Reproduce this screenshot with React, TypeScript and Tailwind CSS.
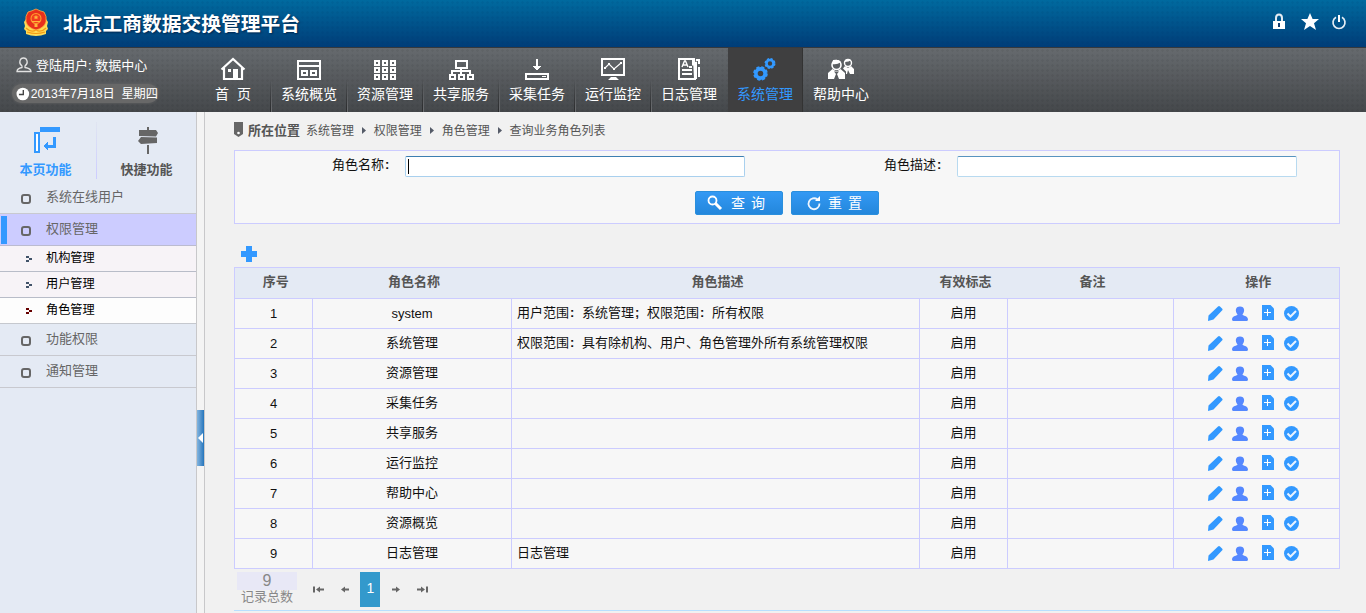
import type { ReactNode } from 'react';

const navItems: { label: string; icon: ReactNode }[] = [
  {
    label: '首 页',
    icon: (
      <>
        <path d="M1.5 12.500 13 2 24.500 12.500M4 11v11h18V11" fill="none" stroke="#fff" strokeWidth="2.200" />
        <path d="M8 12h3v3H8zM13 12h5v10h-5z" fill="#fff" />
      </>
    ),
  },
  {
    label: '系统概览',
    icon: (
      <g fill="none" stroke="#fff" strokeWidth="2" shapeRendering="crispEdges">
        <path d="M2 4h22v18H2zM2 9h22" />
        <path d="M6 14h5v4H6zM15 14h5v4h-5z" />
      </g>
    ),
  },
  {
    label: '资源管理',
    icon: (
      <g fill="none" stroke="#fff" strokeWidth="2" shapeRendering="crispEdges">
        <path d="M3 4h4v4H3zM11 4h4v4h-4zM19 4h4v4h-4zM3 11h4v4H3zM11 11h4v4h-4zM19 11h4v4h-4zM3 18h4v4H3zM11 18h4v4h-4zM19 18h4v4h-4z" />
      </g>
    ),
  },
  {
    label: '共享服务',
    icon: (
      <g fill="none" stroke="#fff" strokeWidth="2" shapeRendering="crispEdges">
        <path d="M8 4h11v7H8z" />
        <path d="M13 11v6M4 17v-3h18v3M2 18h5v4H2zM11 18h5v4h-5zM20 18h5v4h-5z" />
      </g>
    ),
  },
  {
    label: '采集任务',
    icon: (
      <g shapeRendering="crispEdges">
        <path d="M2 17h22v5H2z" fill="none" stroke="#fff" strokeWidth="2" />
        <path d="M12 2h2v7h3l-4 5-4-5h3zM18 19h4v1h-4z" fill="#fff" />
      </g>
    ),
  },
  {
    label: '运行监控',
    icon: (
      <>
        <path d="M2 2h22v16H2z" fill="none" stroke="#fff" strokeWidth="2" />
        <path d="m5 11 4-4 5 5 7-6" fill="none" stroke="#fff" strokeWidth="1.200" />
        <path d="M4 10h2v2H4zM8 6h2v2H8zM13 11h2v2h-2zM20 5h2v2h-2zM11 20h5l3 3H8z" fill="#fff" />
      </>
    ),
  },
  {
    label: '日志管理',
    icon: (
      <>
        <path d="M18 2H3v20h16zM17 2v5l3-1v16M20 3h3v4M23 10v10" fill="none" stroke="#fff" strokeWidth="2" />
        <path d="m6 10 2.500-6h1L12 10M7 8h4" fill="none" stroke="#fff" strokeWidth="1.400" />
        <path d="M13 10h3M6 13h10M6 17h10" fill="none" stroke="#fff" strokeWidth="2" />
      </>
    ),
  },
  {
    label: '系统管理',
    icon: (
      <g fill="none" stroke="#3399ff">
        <circle cx="8.500" cy="16.500" r="4.600" strokeWidth="3.600" />
        <circle cx="8.500" cy="16.500" r="6.200" strokeWidth="2.200" strokeDasharray="3 1.870" />
        <circle cx="18" cy="6.500" r="3.500" strokeWidth="2.600" />
        <circle cx="18" cy="6.500" r="4.700" strokeWidth="1.600" strokeDasharray="2.200 1.490" />
      </g>
    ),
  },
  {
    label: '帮助中心',
    icon: (
      <>
        <circle cx="8.500" cy="8" r="4.500" fill="none" stroke="#fff" strokeWidth="1.600" />
        <path d="M4 7q5 1 9-2-2-3-8-2zM4.500 12 0 16v6h6l2-5-2-2.500h5L9 17l2 5h6v-6l-4.500-4-3 2h-2z" fill="#fff" />
        <circle cx="20" cy="6" r="3.500" fill="none" stroke="#fff" strokeWidth="1.400" />
        <path d="M17 5q4 0 6-2-3-2-6 0zM17 9l-2 2.500 3 3V17h1l1-4 2 4h4v-5l-3-3-3 2z" fill="#fff" />
      </>
    ),
  },
];

const rows = [
  { name: 'system', desc: '用户范围: 系统管理; 权限范围: 所有权限' },
  { name: '系统管理', desc: '权限范围: 具有除机构、用户、角色管理外所有系统管理权限' },
  { name: '资源管理', desc: '' },
  { name: '采集任务', desc: '' },
  { name: '共享服务', desc: '' },
  { name: '运行监控', desc: '' },
  { name: '帮助中心', desc: '' },
  { name: '资源概览', desc: '' },
  { name: '日志管理', desc: '日志管理' },
];

/* Full-width punctuation is drawn in a fixed 13px cell. */
function Wide({ text }: { text: string }) {
  return (
    <>
      {text.split(/([:;])\s?/).map((part, i) =>
        part === ':' || part === ';' ? (
          <span key={i} className="inline-block w-[13px] pl-px font-bold">{part}</span>
        ) : (
          part
        ),
      )}
    </>
  );
}

function Emblem() {
  return (
    <svg className="h-7 w-7" viewBox="0 0 28 28">
      <path d="M4 11 2 14l1 4-1 3 2 2v3q10 4 20 0v-3l2-2-1-3 1-4-2-3z" fill="#ffdc55" />
      <path d="M4 20q5 5 10 2 5 3 10-2M5 24q9 3 18 0" fill="none" stroke="#f59a14" strokeWidth="1.100" />
      <path d="M14 1q4 2 8 3 3 4 2 10-2 6-10 8Q6 20 4 14 3 8 6 4q4-1 8-3z" fill="#e8301c" stroke="#ffb040" strokeWidth=".8" />
      <circle cx="14" cy="10.500" r="5" fill="#f23c1f" stroke="#ff9d2e" strokeWidth="1.100" />
      <path d="m14 7 .8 1.500h1.700l-1.300 1.200.4 1.600-1.600-.9-1.600.9.4-1.600-1.300-1.200h1.700zM10 13h8v1h-8zM12.500 16h3v3h-3z" fill="#ffb63d" />
    </svg>
  );
}

function Square() {
  return <span className="h-[10px] w-[10px] rounded-[3px] border-2 border-[#666]" />;
}

function MenuItem({ label, active = false }: { label: string; active?: boolean }) {
  return (
    <div
      className={
        active
          ? 'flex h-8 items-center border-b border-[#bbbbd0] bg-[#ccccff] text-[13px] text-[#666]'
          : 'flex h-8 items-center border-b border-[#c8c9cf] text-[13px] text-[#666]'
      }
    >
      <span className={active ? 'ml-px h-7 w-[6px] bg-[#3399ff]' : 'ml-px h-7 w-[6px]'} />
      <span className="ml-[14px] mt-[3px] flex"><Square /></span>
      <span className="-mt-[2px] ml-[15px]">{label}</span>
    </div>
  );
}

function SubItem({ label, active = false }: { label: string; active?: boolean }) {
  return (
    <div
      className={
        active
          ? 'flex h-[26px] items-start border-b border-[#c5c8ce] bg-[#fdfdfd] text-[12.2px] text-black'
          : 'flex h-[26px] items-start border-b border-[#b8bcc8] bg-[#f7f3f7] text-[12.2px] text-black'
      }
    >
      <svg className="ml-[26px] mt-[10px] h-[6px] w-[6px]" viewBox="0 0 6 6" shapeRendering="crispEdges">
        <path d="M0 0h3v2H0zM3 2h3v2H3zM0 4h3v2H0z" fill={active ? '#660000' : '#415269'} />
      </svg>
      <span className="ml-[14px] leading-[25px]">{label}</span>
    </div>
  );
}

function Crumb({ label }: { label: string }) {
  return (
    <>
      <svg className="ml-[8px] mr-[7.800px] h-[7px] w-[4px]" viewBox="0 0 4 7"><path d="M0 0l4 3.500L0 7z" fill="#555b68" /></svg>
      <span>{label}</span>
    </>
  );
}

function RowActions() {
  return (
    <div className="flex h-[27px] items-start pl-[33px] pt-[5px]">
      <svg className="h-4 w-4" viewBox="0 0 16 16">
        <path d="M1 16l.5-5.500L11 1.500q1-1 2 0l2.500 2.500v1L6.500 14.500z" fill="#3399ff" />
      </svg>
      <svg className="ml-[9px] mt-px h-4 w-4" viewBox="0 0 16 16">
        <path d="M8 .5c5 0 5 5 2.500 8 0 1.500 5.500 1 5.500 5 0 1.500-1 1.500-2 1.500H2c-1 0-2 0-2-1.500 0-4 5.500-3.500 5.500-5C3 5.500 3 .5 8 .5z" fill="#5588ff" />
      </svg>
      <svg className="ml-[14px] h-4 w-3" viewBox="0 0 12 16">
        <path d="M0 0h8.500L12 3.500V15H0z" fill="#3399ff" />
        <path d="M5.500 4v7M2 7.500h7" stroke="#fff" />
      </svg>
      <svg className="ml-[10px] mt-px h-4 w-4" viewBox="0 0 16 16">
        <circle cx="7.500" cy="7.500" r="7.500" fill="#3399ff" />
        <path d="m3.500 7.500 3 3 5.500-5.500" fill="none" stroke="#e9f3ff" strokeWidth="2" />
      </svg>
    </div>
  );
}

function Header() {
  return (
    <header className="flex h-12 items-center border-b border-[#35393e] bg-[radial-gradient(circle,rgba(0,40,90,0.08)_1px,transparent_1.5px),linear-gradient(#006a9f,#003d78)] bg-[size:5px_5px,100%_100%] pl-[22px] pr-[19px]">
      <div className="-mt-[3px]"><Emblem /></div>
      <h1 className="ml-[13px] text-[19.75px] font-bold leading-[46px] text-white [text-shadow:1px_1px_2px_#00264d]">北京工商数据交换管理平台</h1>
      <div className="ml-auto mt-[-4px] flex items-center">
        <svg className="h-[17px] w-[14px]" viewBox="0 0 14 17">
          <path d="M4 8V5q0-3.500 3-3.500T10 5v3" fill="none" stroke="#e3ebf2" strokeWidth="2" />
          <path d="M1 8h12v8H1z" fill="#fff" /><path d="M6 10h2v4H6z" fill="#123e70" />
        </svg>
        <svg className="ml-[15px] h-[18px] w-[18px]" viewBox="0 0 18 18">
          <path d="m9 0 2.600 6H18l-5 4.300 2 6.700-6-4-6 4 2-6.700L0 6h6.400z" fill="#fff" />
        </svg>
        <svg className="ml-[12px] h-4 w-4" viewBox="0 0 16 16">
          <path d="M5 3.300a6 6 0 1 0 6 0" fill="none" stroke="#e6eef5" strokeWidth="1.700" />
          <path d="M8 1v7" stroke="#fff" strokeWidth="2" />
        </svg>
      </div>
    </header>
  );
}

function NavBar() {
  return (
    <nav className="flex h-16 bg-[radial-gradient(circle,rgba(0,0,0,0.05)_1px,transparent_1.5px),linear-gradient(#666a6e,#45484b)] bg-[size:5px_5px,100%_100%] text-white">
      <div className="w-[195px] pl-3 pt-2">
        <div className="flex h-5 items-center pl-1 text-[13px]">
          <svg className="-mt-[2px] h-4 w-4" viewBox="0 0 16 16">
            <path d="M6 9C2 6 4 1 7.500 1S13 6 9 9v1.500q6 1 6 4H1q0-3 5-4z" fill="none" stroke="#e2e2e2" strokeWidth="1.300" />
          </svg>
          <span className="ml-1">登陆用户: 数据中心</span>
        </div>
        <div className="mt-[8px] flex h-[19px] w-[146px] items-center rounded-full bg-[#686868] pl-[4px] text-[12.2px] shadow-[0_0_3px_#686868]">
          <svg className="h-[14px] w-[14px]" viewBox="0 0 14 14"><circle cx="7" cy="7" r="6.500" fill="#fff" /><path d="M7.500 3v4.500H3" fill="none" stroke="#444" strokeWidth="1.400" /></svg>
          <span className="ml-px mt-[2px] whitespace-pre">2013年7月18日&nbsp; 星期四</span>
        </div>
      </div>
      {navItems.map((item, i) => (
        <div
          key={item.label}
          className={
            i === 7
              ? 'ml-px flex w-[75px] flex-col items-center border-r border-[#333] bg-[#3f3f40] pt-[9px] text-[#3399ff]'
              : 'flex w-[76px] flex-col items-center pt-[9px]'
          }
        >
          <svg className="h-6 w-[26px] overflow-visible" viewBox="0 0 26 24">{item.icon}</svg>
          <span className="mt-1 whitespace-pre text-[14px] leading-[18px]">{i === 0 ? '首  页' : item.label}</span>
          {i < 6 && (
            <span className="-mt-[24px] ml-[76px] flex h-[33px] w-[2px]">
              <span className="w-px bg-linear-to-b from-transparent to-[#2b2c2e]" />
              <span className="w-px bg-linear-to-b from-transparent to-[#6b6d70]" />
            </span>
          )}
        </div>
      ))}
    </nav>
  );
}

function Sidebar() {
  return (
    <aside className="w-[197px] border-r border-[#c8c8ca] bg-[#e4eaf4]">
      <div className="flex h-[70px] text-[13px] font-bold">
        <div className="flex w-24 flex-col items-center pl-0 pt-[14px] text-[#3399ff]">
          <svg className="-ml-[5px] h-[27px] w-[28px]" viewBox="0 0 28 27" shapeRendering="crispEdges">
            <path d="M8 1h20v5H8z" fill="#3399ff" /><path d="M3 7h4v19H3z" fill="#fff" stroke="#3399ff" strokeWidth="2" />
            <path d="M22.500 11v9H15" fill="none" stroke="#3399ff" strokeWidth="3" /><path d="M11 20l5-4v8z" fill="#3399ff" />
          </svg>
          <span className="-ml-[5px] mt-[8px] leading-[18px]">本页功能</span>
        </div>
        <span className="mt-[10px] h-[57px] w-px bg-linear-to-b from-[#e0e5f1] to-[#ccccff]" />
        <div className="flex w-[99px] flex-col items-center pt-[14px] text-[#555]">
          <svg className="ml-[3px] h-[28px] w-[24px]" viewBox="0 0 24 28">
            <path d="M11 1h2v3h-2zM3 4h17l2 3-2 3.500L3 10zM21 11.500 5 11l-3 4 3 3 16-1zM11 19h2v9h-2z" fill="#666" />
          </svg>
          <span className="mt-[7px] leading-[18px]">快捷功能</span>
        </div>
      </div>
      <MenuItem label="系统在线用户" />
      <MenuItem label="权限管理" active />
      <SubItem label="机构管理" />
      <SubItem label="用户管理" />
      <SubItem label="角色管理" active />
      <MenuItem label="功能权限" />
      <MenuItem label="通知管理" />
    </aside>
  );
}

function SearchPanel() {
  return (
    <section className="mt-[10px] h-[74px] border border-[#ccccff] bg-[#f7f7f7] pt-[5px] text-[13px] text-[#111]">
      <div className="flex">
        <label className="w-[170px] pl-[97px] leading-[18px]"><Wide text="角色名称:" /></label>
        <div className="h-[21px] w-[340px] rounded-[2px] border border-[#a9d0ee] border-t-[#3c7fb1] bg-white pl-[2px] pt-[2px]">
          <span className="block h-[15px] w-px bg-black" />
        </div>
        <label className="w-[212px] pl-[139px] leading-[18px]"><Wide text="角色描述:" /></label>
        <div className="h-[21px] w-[340px] rounded-[2px] border border-[#b8daf0] border-t-[#5794bf] bg-white" />
      </div>
      <div className="mt-[14px] flex justify-center gap-2 pl-0 text-[14px] text-white">
        <button className="flex h-6 w-[88px] items-center rounded-[2px] border border-[#2a8fdd] bg-linear-to-b from-[#3399f4] to-[#2387dc] pl-[11px]">
          <svg className="-mt-px h-4 w-4" viewBox="0 0 16 16"><circle cx="5.500" cy="5.500" r="4" fill="none" stroke="#fff" strokeWidth="1.800" /><path d="m8.500 8.500 5.500 5.500" stroke="#fff" strokeWidth="3" /></svg>
          <span className="ml-[8px] tracking-[6px]">查询</span>
        </button>
        <button className="flex h-6 w-[88px] items-center rounded-[2px] border border-[#2a8fdd] bg-linear-to-b from-[#3399f4] to-[#2387dc] pl-[14px]">
          <svg className="h-4 w-4" viewBox="0 0 16 16"><path d="M11.500 4.500a5.500 5.500 0 1 0 2 4" fill="none" stroke="#eef6ff" strokeWidth="1.800" /><path d="M9 6h5V1z" fill="#fff" /></svg>
          <span className="ml-[6px] tracking-[6px]">重置</span>
        </button>
      </div>
    </section>
  );
}

function RoleTable() {
  const cell = 'border border-[#ccccff] p-0';
  const textCell = 'border border-[#ccccff] p-0 pb-[2px]';
  return (
    <table className="mt-[5px] w-[1106px] table-fixed border-collapse bg-[#f7f7f7] text-[13px] text-[#111]">
      <colgroup>
        <col className="w-[78px]" /><col className="w-[199px]" /><col className="w-[408px]" /><col className="w-[88px]" /><col className="w-[166px]" /><col className="w-[166px]" />
      </colgroup>
      <thead>
        <tr className="h-[31px] bg-[#e4eaf4] text-[#555]">
          {['序号', '角色名称', '角色描述', '有效标志', '备注', '操作'].map((h) => (
            <th key={h} className="border-y border-[#ccccff] p-0 pb-[2px] pl-[4px] leading-[20px] first:border-l last:border-r">{h}</th>
          ))}
        </tr>
      </thead>
      <tbody>
        {rows.map((row, i) => (
          <tr key={row.name} className="h-[30px] text-center leading-[20px]">
            <td className={cell}>{i + 1}</td>
            <td className={i === 0 ? cell : textCell}>{row.name}</td>
            <td className="border border-[#ccccff] p-0 pb-[2px] pl-[5px] text-left"><Wide text={row.desc} /></td>
            <td className={textCell}>启用</td>
            <td className={cell} />
            <td className="border border-[#ccccff] p-0"><RowActions /></td>
          </tr>
        ))}
      </tbody>
    </table>
  );
}

function Pager() {
  return (
    <div className="mt-[3px] flex h-[39px] border-b border-[#b8dfff] pl-[3px]">
      <div className="w-[60px] text-center text-[#888]">
        <div className="h-[18px] bg-[#e8e8f6] text-[16px] leading-[18px]">9</div>
        <div className="text-[13px] leading-[13px]">记录总数</div>
      </div>
      <svg className="ml-4 mt-[14px] h-[7px] w-[11px]" viewBox="0 0 11 7"><path d="M0 .5h2v6H0zM3 3.500l4-3v2h4v2H7v2z" fill="#666" /></svg>
      <svg className="ml-[17px] mt-[14px] h-[7px] w-2" viewBox="0 0 8 7"><path d="M0 3.500l4-3v2h4v2H4v2z" fill="#666" /></svg>
      <div className="ml-[11px] h-[35px] w-5 bg-[#3399cc] pl-px text-center text-[14px] leading-[33px] text-white">1</div>
      <svg className="ml-3 mt-[14px] h-[7px] w-2" viewBox="0 0 8 7"><path d="M8 3.500l-4-3v2H0v2h4v2z" fill="#666" /></svg>
      <svg className="ml-[17px] mt-[14px] h-[7px] w-[11px]" viewBox="0 0 11 7"><path d="M9 .5h2v6H9zM8 3.500l-4-3v2H0v2h4v2z" fill="#666" /></svg>
    </div>
  );
}

export default function App() {
  return (
    <div className="flex h-[613px] w-[1366px] flex-col overflow-hidden bg-[#f1f1f1] font-['Liberation_Sans','Noto_Sans_CJK_SC',sans-serif]">
      <Header />
      <NavBar />
      <div className="flex flex-1">
        <Sidebar />
        <div className="flex w-2 flex-col border-r border-[#c8c8ca] bg-[#f4f4f4] pt-[298px]">
          <div className="flex h-14 w-[7px] items-center bg-linear-to-r from-[#83b5de] to-[#2276bd] pl-px">
            <svg className="h-[10px] w-[5px]" viewBox="0 0 5 10"><path d="M5 0v10L0 5z" fill="#fff" /></svg>
          </div>
        </div>
        <main className="w-[1135px] pl-[29px]">
          <div className="flex h-7 items-center pt-[9px] text-[12px] text-[#555]">
            <svg className="-mt-[2px] h-[15px] w-[9px]" viewBox="0 0 9 15"><path d="M0 0h9v12l-4.500 3L0 12z" fill="#666" /><circle cx="4.500" cy="11" r="1.300" fill="#fff" /></svg>
            <span className="ml-[5px] text-[13px] font-bold">所在位置</span>
            <span className="ml-[6px]">系统管理</span>
            <Crumb label="权限管理" />
            <Crumb label="角色管理" />
            <Crumb label="查询业务角色列表" />
          </div>
          <SearchPanel />
          <svg className="ml-[7px] mt-[22px] h-4 w-4" viewBox="0 0 16 16"><path d="M5 0h6v5h5v6h-5v5H5v-5H0V5h5z" fill="#3399ff" /></svg>
          <RoleTable />
          <Pager />
        </main>
      </div>
    </div>
  );
}
